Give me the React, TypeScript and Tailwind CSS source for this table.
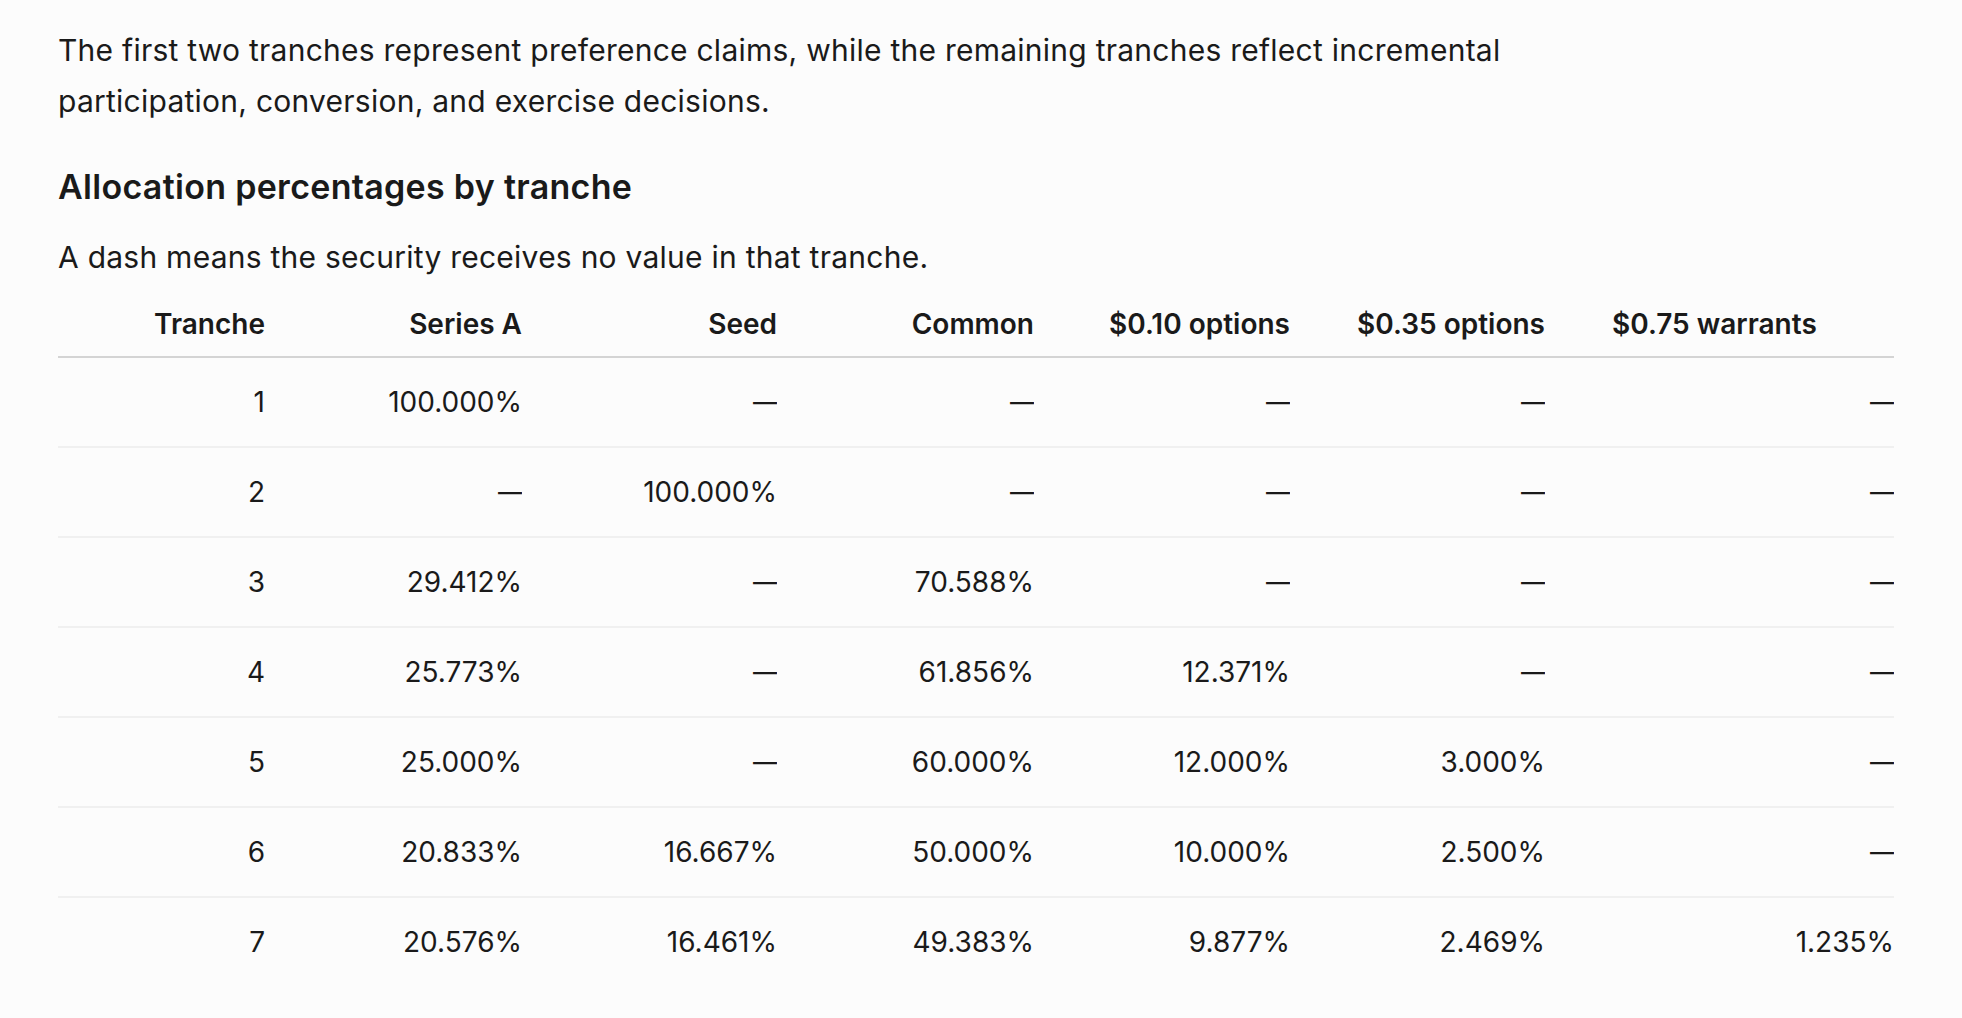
const COLUMNS = ['Tranche', 'Series A', 'Seed', 'Common', '$0.10 options', '$0.35 options', '$0.75 warrants']

const D = '—'

const ROWS: string[][] = [
  ['1', '100.000%', D, D, D, D, D],
  ['2', D, '100.000%', D, D, D, D],
  ['3', '29.412%', D, '70.588%', D, D, D],
  ['4', '25.773%', D, '61.856%', '12.371%', D, D],
  ['5', '25.000%', D, '60.000%', '12.000%', '3.000%', D],
  ['6', '20.833%', '16.667%', '50.000%', '10.000%', '2.500%', D],
  ['7', '20.576%', '16.461%', '49.383%', '9.877%', '2.469%', '1.235%'],
]

// fixed column widths so the right-aligned figures line up with the screenshot
const GRID = 'grid grid-cols-[207px_257px_255px_257px_256px_255px_1fr]'

function Cell({ value }: { value: string }) {
  if (value === D) {
    return (
      <div className="text-right">
        <span className="inline-block scale-x-[0.86] origin-right">{D}</span>
      </div>
    )
  }
  return <div className="text-right">{value}</div>
}

export default function App() {
  return (
    <div className="min-h-screen bg-[#fcfcfc] text-[#1a1a1a] font-['Inter','Liberation_Sans',sans-serif]">
      <div className="pl-[58px] pt-[25px] w-[1894px]">
        <p className="text-[30px] leading-[51px] tracking-[0.25px] max-w-[1540px]">
          The first two tranches represent preference claims, while the remaining tranches reflect incremental
          participation, conversion, and exercise decisions.
        </p>

        <h2 className="mt-[38px] text-[34px] leading-[43px] tracking-[0.3px] font-semibold">
          Allocation percentages by tranche
        </h2>

        <p className="mt-[24px] text-[30px] leading-[51px] tracking-[0.25px]">
          A dash means the security receives no value in that tranche.
        </p>

        {/* Table */}
        <div className="text-[28px] leading-[42px]">
          <div className={`${GRID} border-b-2 border-[#d4d4d4] pt-[20px] pb-[11px] font-semibold`}>
            {COLUMNS.map((c, i) => (
              <div key={c} className={i === COLUMNS.length - 1 ? 'text-left pl-[67px]' : 'text-right'}>
                {c}
              </div>
            ))}
          </div>
          {ROWS.map((row, r) => (
            <div
              key={r}
              className={`${GRID} py-[23px] ${r < ROWS.length - 1 ? 'border-b-2 border-[#f0f0f0]' : ''}`}
            >
              {row.map((cell, i) => (
                <Cell key={i} value={cell} />
              ))}
            </div>
          ))}
        </div>
      </div>
    </div>
  )
}
